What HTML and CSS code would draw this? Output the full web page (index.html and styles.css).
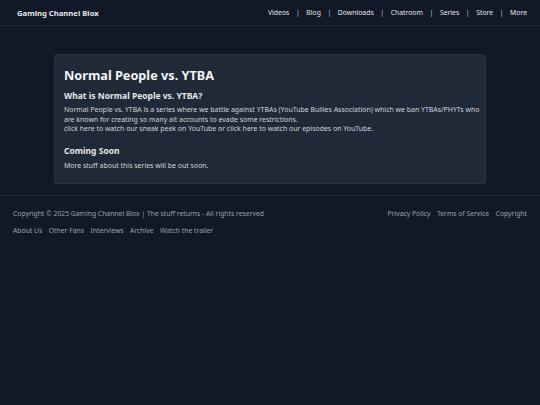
FILE: index.html
```html
<!DOCTYPE html>
<html lang="en">
<head>
<meta charset="utf-8">
<title>Normal People vs. YTBA</title>
<link rel="stylesheet" href="styles.css">
</head>
<body>
<header class="topbar">
  <div class="brand">Gaming Channel Blox</div>
  <nav class="nav">
    <a href="#">Videos</a><span class="sep">|</span>
    <a href="#">Blog</a><span class="sep">|</span>
    <a href="#">Downloads</a><span class="sep">|</span>
    <a href="#">Chatroom</a><span class="sep">|</span>
    <a href="#">Series</a><span class="sep">|</span>
    <a href="#">Store</a><span class="sep">|</span>
    <a href="#">More</a>
  </nav>
</header>
<main class="main">
  <section class="card">
    <h1 class="title">Normal People vs. YTBA</h1>
    <h2 class="subtitle">What is Normal People vs. YTBA?</h2>
    <p class="text">Normal People vs. YTBA is a series where we battle against YTBAs (YouTube Bullies Association) which we ban YTBAs/PHYTs who are known for creating so many alt accounts to evade some restrictions.<br>click here to watch our sneak peek on YouTube or click here to watch our episodes on YouTube.</p>
    <h2 class="subtitle second">Coming Soon</h2>
    <p class="text">More stuff about this series will be out soon.</p>
  </section>
</main>
<footer class="footer">
  <div class="footer-row">
    <span>Copyright © 2025 Gaming Channel Blox | The stuff returns - All rights reserved</span>
    <div class="links">
      <a href="#">Privacy Policy</a>
      <a href="#">Terms of Service</a>
      <a href="#">Copyright</a>
    </div>
  </div>
  <div class="links bottom">
    <a href="#">About Us</a>
    <a href="#">Other Fans</a>
    <a href="#">Interviews</a>
    <a href="#">Archive</a>
    <a href="#">Watch the trailer</a>
  </div>
</footer>
</body>
</html>
```
FILE: styles.css
```css
* { box-sizing: border-box; }
html, body { margin: 0; padding: 0; }
body {
  background: #111827;
  color: #e5e7eb;
  font-family: "Noto Sans", "Open Sans", sans-serif;
  min-height: 405px;
}
a { color: inherit; text-decoration: none; }

.topbar {
  height: 26px;
  display: flex;
  align-items: center;
  justify-content: space-between;
  padding: 0 13px 0 17px;
  border-bottom: 1px solid #1f2937;
}
.brand {
  font-size: 7.7px;
  font-weight: 700;
  color: #e5e7eb;
}
.nav {
  display: flex;
  align-items: center;
  gap: 6.6px;
  font-size: 6.85px;
  color: #e5e7eb;
}
.sep { color: #d1d5db; }

.main {
  padding: 28px 54px 11px;
}
.card {
  background: #1f2937;
  border: 1px solid #283446;
  border-radius: 3px;
  padding: 11px 3px 13px 9px;
}
.title {
  margin: 0;
  font-size: 12.7px;
  line-height: 18px;
  font-weight: 700;
  color: #f3f4f6;
}
.subtitle {
  margin: 5px 0 3px;
  font-size: 8.5px;
  line-height: 13px;
  font-weight: 700;
  color: #e5e7eb;
}
.subtitle.second { margin-top: 10px; margin-bottom: 4px; }
.text {
  margin: 0;
  font-size: 6.95px;
  line-height: 9.6px;
  color: #d1d5db;
}

.footer {
  border-top: 1px solid #1f2937;
  padding: 12px 13px 0 13px;
  font-size: 6.8px;
  color: #9ca3af;
}
.footer-row {
  display: flex;
  justify-content: space-between;
  align-items: center;
  line-height: 12px;
}
.links {
  display: flex;
  gap: 6.5px;
}
.links.bottom { margin-top: 5px; line-height: 12px; }
```
